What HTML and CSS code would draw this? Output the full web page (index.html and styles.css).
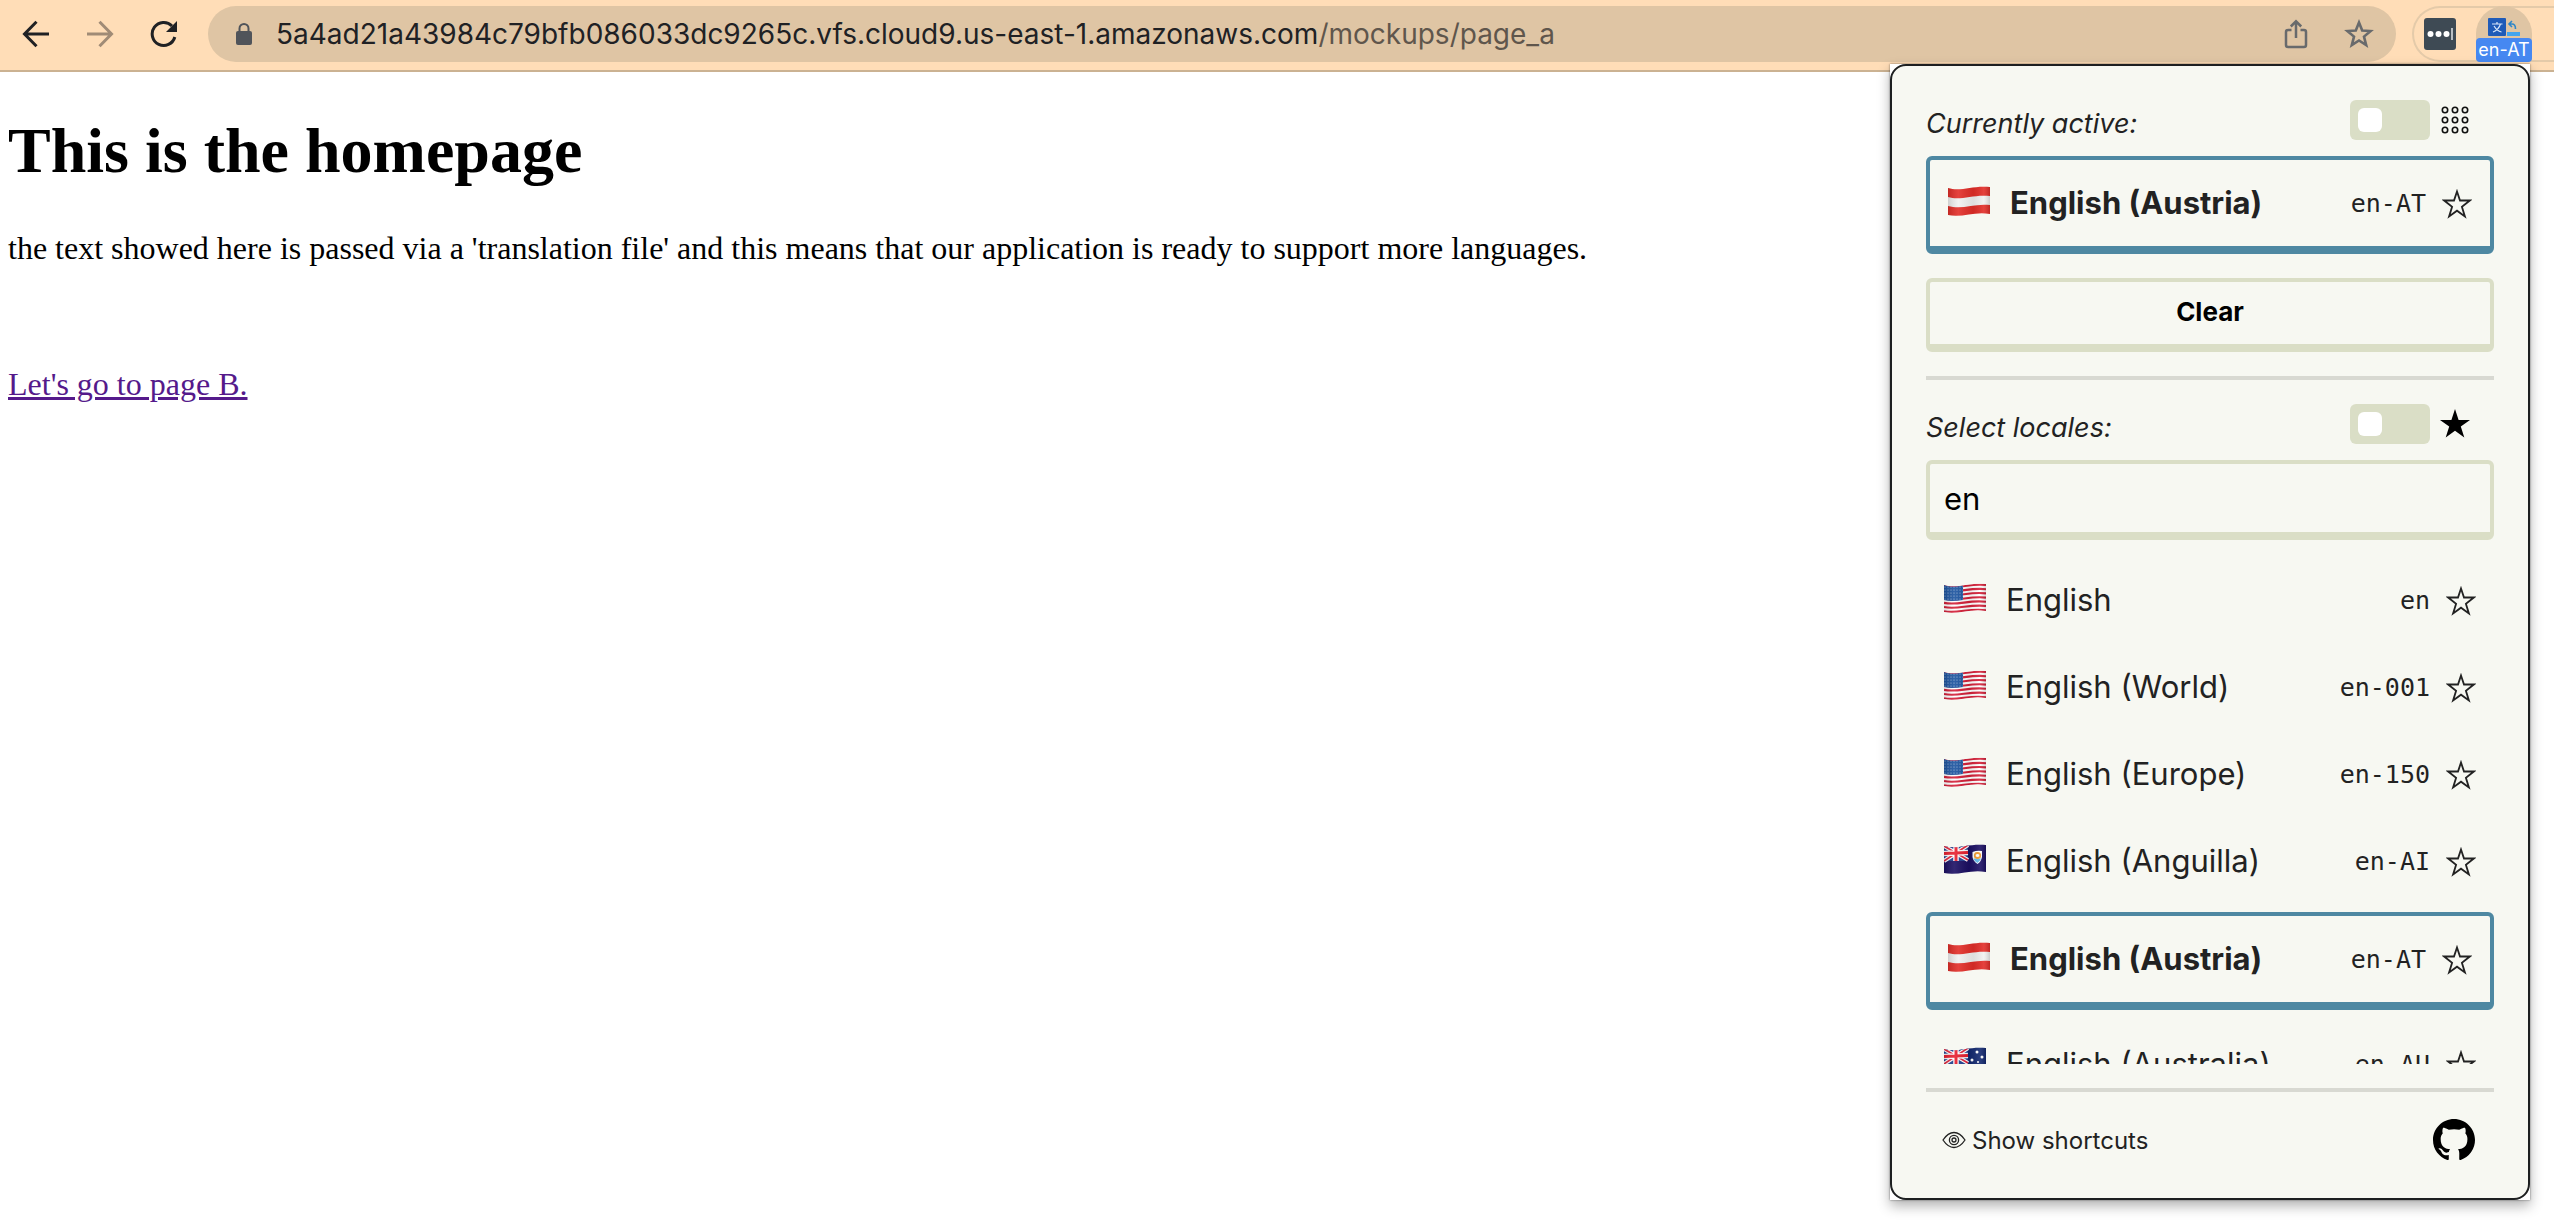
FILE: index.html
```html
<!DOCTYPE html>
<html lang="en">
<head>
<meta charset="utf-8">
<title>This is the homepage</title>
<link rel="stylesheet" href="styles.css">
</head>
<body>
<svg class="sprite" aria-hidden="true">
  <defs>
    <clipPath id="wave"><path d="M0 2C13 6 25-1 42 1V28C26 25 15 32 0 29Z"/></clipPath>
    <linearGradient id="shade"><stop offset="0" stop-color="#000" stop-opacity=".14"/><stop offset=".25" stop-color="#fff" stop-opacity=".1"/><stop offset=".6" stop-color="#000" stop-opacity=".08"/><stop offset=".85" stop-color="#fff" stop-opacity=".1"/><stop offset="1" stop-color="#000" stop-opacity=".16"/></linearGradient>
    <pattern id="stars" width="3" height="3" patternUnits="userSpaceOnUse"><rect width="3" height="3" fill="#1c54a0"/><circle cx="1" cy="1" r=".6" fill="#a9c0de"/></pattern>
    <symbol id="flag-at" viewBox="0 0 42 30"><g clip-path="url(#wave)"><rect width="42" height="30" fill="#e22d28"/><path d="M0 11C13 15 25 8 42 10V19C26 17 15 24 0 20Z" fill="#f1f1f1"/><rect width="42" height="30" fill="url(#shade)"/></g></symbol>
    <symbol id="flag-us" viewBox="0 0 42 30"><g clip-path="url(#wave)"><rect width="42" height="30" fill="#fff"/><g fill="none" stroke="#d51f38" stroke-width="2.1"><path d="M0 3C13 7 25 0 42 2"/><path d="M0 7.2C13 11 25 4 42 6.2"/><path d="M0 11.4C13 15 25 8 42 10.4"/><path d="M0 15.6C13 19 25 12.5 42 14.6"/><path d="M0 19.8C13 23 25 16.5 42 18.8"/><path d="M0 24C13 27 25 21 42 23"/><path d="M0 28.2C13 31 25 25 42 27.2"/></g><path d="M0 2C6 4 12 4 19 2.500V17C12 18 6 18.500 0 17Z" fill="url(#stars)"/><rect width="42" height="30" fill="url(#shade)"/></g></symbol>
    <g id="union-jack"><path d="M0 0H24V17H0Z" fill="#1f3f8f"/><path d="M0 2L24 16M0 17L24 1" stroke="#fff" stroke-width="4"/><path d="M0 2L24 16M0 17L24 1" stroke="#e4253c" stroke-width="1.600"/><path d="M12 0V17M0 9.500L24 8.500" stroke="#fff" stroke-width="5.500"/><path d="M12 0V17M0 9.500L24 8.500" stroke="#e8202f" stroke-width="3"/></g>
    <symbol id="flag-ai" viewBox="0 0 42 30"><g clip-path="url(#wave)"><rect width="42" height="30" fill="#1b0f63"/><use href="#union-jack"/><path d="M28.500 8Q33 6 38 7V13Q37 18 33.500 20Q29 17 28.500 13Z" fill="#fff"/><path d="M29.500 14.500H37Q36 17.500 33.500 19Q30 17 29.500 14.500Z" fill="#62b8e8"/><path d="M31 13Q30 9 33.500 9Q37 9 36 13Q33.500 15 31 13Z" fill="none" stroke="#f0992b" stroke-width="1.800"/><rect width="42" height="30" fill="url(#shade)"/></g></symbol>
    <symbol id="flag-au" viewBox="0 0 42 30"><g clip-path="url(#wave)"><rect width="42" height="30" fill="#12286f"/><use href="#union-jack"/><g fill="#fff"><circle cx="33" cy="5" r="1.500"/><circle cx="28" cy="13" r="1.500"/><circle cx="38" cy="10" r="1.500"/><circle cx="34" cy="15" r="1"/><circle cx="33" cy="23" r="1.500"/><circle cx="12" cy="23" r="2.500"/></g><rect width="42" height="30" fill="url(#shade)"/></g></symbol>
    <symbol id="star" viewBox="0 0 30 30"><path d="M15 2.500L18 11.500H27.800L19.900 17.800L22.900 27.500L15 21.700L7.100 27.500L10.100 17.800L2.200 11.500H12Z" fill="none" stroke="currentColor" stroke-width="1.800"/></symbol>
    <symbol id="star-solid" viewBox="0 0 30 30"><path d="M15 0L18.600 11H30L20.800 17.600L24.300 28.500L15 21.800L5.700 28.500L9.200 17.600L0 11H11.400Z"/></symbol>
  </defs>
</svg>

<header class="toolbar">
  <nav class="nav-buttons">
    <button class="icon-button" aria-label="Back"><svg width="28" height="28" viewBox="0 0 28 28" fill="none" stroke="#202124" stroke-width="3"><path d="M27 14H3M14.500 1.800L2.500 14L14.500 26.200"/></svg></button>
    <button class="icon-button" aria-label="Forward" disabled><svg width="28" height="28" viewBox="0 0 28 28" fill="none" stroke="#a08b76" stroke-width="3"><path d="M1 14H25M13.500 1.800L25.500 14L13.500 26.200"/></svg></button>
    <button class="icon-button" aria-label="Reload"><svg width="28" height="28" viewBox="0 0 28 28"><path d="M24.800 17A11.500 11.500 0 1 1 22 6" fill="none" stroke="#202124" stroke-width="3"/><path d="M27 1V12H16Z" fill="#202124"/></svg></button>
  </nav>
  <div class="omnibox">
    <svg width="16" height="22" viewBox="0 0 16 22"><rect y="8" width="16" height="14" rx="2" fill="#50545a"/><path d="M3.500 9V5.500a4.500 4.500 0 0 1 9 0V9" fill="none" stroke="#50545a" stroke-width="2"/></svg>
    <div class="url" role="textbox" aria-label="Address">5a4ad21a43984c79bfb086033dc9265c.vfs.cloud9.us-east-1.amazonaws.com<span class="url-path">/mockups/page_a</span></div>
    <div class="omnibox-actions">
      <button class="icon-button" aria-label="Share"><svg width="24" height="30" viewBox="0 0 24 30" fill="none" stroke="#686a6c" stroke-width="2.500"><path d="M7.500 11H4Q2 11 2 13V26Q2 28 4 28H20Q22 28 22 26V13Q22 11 20 11H16.500M12 19V2.500M6.800 7.500L12 2.300L17.200 7.500"/></svg></button>
      <button class="icon-button" aria-label="Bookmark"><svg width="30" height="30" viewBox="0 0 30 30"><path d="M15 3.500L18.200 11.500L26.600 12L20 17.600L22.200 26.200L15 21.500L7.800 26.200L10 17.600L3.400 12L11.800 11.500Z" fill="none" stroke="#686a6c" stroke-width="2.600"/></svg></button>
    </div>
  </div>
  <div class="extensions">
    <button class="icon-button" aria-label="Password manager"><svg width="32" height="32" viewBox="0 0 32 32"><rect width="32" height="32" rx="3" fill="#3e4a54"/><g fill="#fff"><circle cx="6.500" cy="16" r="3"/><circle cx="14.500" cy="16" r="3"/><circle cx="22.500" cy="16" r="3"/><rect x="27" y="10" width="2" height="12" fill="#b9bec3"/></g></svg></button>
    <button class="locale-extension" aria-label="Locale switcher en-AT">
      <svg width="32" height="19" viewBox="0 0 32 19"><rect width="18" height="18" rx="1" fill="#1f5bb8"/><path d="M4 6H14.500M9 4V6M12.500 6Q10.500 12 5 14M6 8Q9 13 13.500 14" fill="none" stroke="#dbe8fa" stroke-width="1.200"/><path d="M21 6H24Q27.500 6 27.500 11M24 3L21 6L24 9" fill="none" stroke="#2f87c9" stroke-width="1.600"/><path d="M19 14H32V18H19Z" fill="#43a5ef"/></svg>
      <span class="badge">en-AT</span>
    </button>
  </div>
</header>

<main class="page">
  <h1>This is the homepage</h1>
  <p>the text showed here is passed via a 'translation file' and this means that our application is ready to support more languages.</p>
  <p class="page-link"><a href="#page-b">Let's go to page B.</a></p>
</main>

<aside class="popup-window">
  <div class="popup">
    <div class="section-head">
      <h2>Currently active:</h2>
      <label class="switch"><input type="checkbox" aria-label="Show as grid"><svg width="28" height="28" viewBox="0 0 28 28" fill="none" stroke="#111" stroke-width="1.600"><g id="dots"><circle cx="4" cy="4" r="2.700"/><circle cx="14" cy="4" r="2.700"/><circle cx="24" cy="4" r="2.700"/></g><use href="#dots" y="10"/><use href="#dots" y="20"/></svg></label>
    </div>
    <div class="locale selected">
      <svg class="flag"><use href="#flag-at"/></svg><span class="name">English (Austria)</span><code>en-AT</code><button class="icon-button" aria-label="Star en-AT"><svg width="30" height="30"><use href="#star"/></svg></button>
    </div>
    <button class="clear">Clear</button>
    <hr>
    <div class="section-head">
      <h2><label for="search">Select locales:</label></h2>
      <label class="switch"><input type="checkbox" aria-label="Starred only"><svg width="30" height="30"><use href="#star-solid"/></svg></label>
    </div>
    <input class="search" id="search" type="text" value="en">
    <ul class="locales">
      <li class="locale"><svg class="flag"><use href="#flag-us"/></svg><span class="name">English</span><code>en</code><button class="icon-button" aria-label="Star en"><svg width="30" height="30"><use href="#star"/></svg></button></li>
      <li class="locale"><svg class="flag"><use href="#flag-us"/></svg><span class="name">English (World)</span><code>en-001</code><button class="icon-button" aria-label="Star en-001"><svg width="30" height="30"><use href="#star"/></svg></button></li>
      <li class="locale"><svg class="flag"><use href="#flag-us"/></svg><span class="name">English (Europe)</span><code>en-150</code><button class="icon-button" aria-label="Star en-150"><svg width="30" height="30"><use href="#star"/></svg></button></li>
      <li class="locale"><svg class="flag"><use href="#flag-ai"/></svg><span class="name">English (Anguilla)</span><code>en-AI</code><button class="icon-button" aria-label="Star en-AI"><svg width="30" height="30"><use href="#star"/></svg></button></li>
      <li class="locale selected"><svg class="flag"><use href="#flag-at"/></svg><span class="name">English (Austria)</span><code>en-AT</code><button class="icon-button" aria-label="Star en-AT"><svg width="30" height="30"><use href="#star"/></svg></button></li>
      <li class="locale"><svg class="flag"><use href="#flag-au"/></svg><span class="name">English (Australia)</span><code>en-AU</code><button class="icon-button" aria-label="Star en-AU"><svg width="30" height="30"><use href="#star"/></svg></button></li>
    </ul>
    <hr>
    <footer class="popup-footer">
      <button class="shortcuts"><svg width="24" height="20" viewBox="0 0 24 20" fill="none" stroke="#222" stroke-width="1.300"><path d="M1 10Q6 2.500 12 2.500T23 10Q18 17.500 12 17.500T1 10Z"/><circle cx="12" cy="10" r="4.600"/><circle cx="12" cy="10" r="2"/></svg>Show shortcuts</button>
      <a class="github" href="#github" aria-label="GitHub"><svg width="42" height="42" viewBox="0 0 16 16"><path d="M8 0C3.580 0 0 3.580 0 8c0 3.540 2.290 6.530 5.470 7.590.4.070.55-.17.55-.38 0-.19-.01-.82-.01-1.490-2.010.37-2.530-.49-2.690-.94-.09-.23-.48-.94-.82-1.130-.28-.15-.68-.52-.01-.53.63-.01 1.080.58 1.230.82.72 1.210 1.870.87 2.330.66.07-.52.28-.87.51-1.070-1.780-.2-3.640-.89-3.640-3.950 0-.87.31-1.590.82-2.150-.08-.2-.36-1.020.08-2.120 0 0 .67-.21 2.200.82.64-.18 1.320-.27 2-.27s1.360.09 2 .27c1.530-1.040 2.200-.82 2.200-.82.44 1.100.16 1.920.08 2.120.51.56.82 1.270.82 2.150 0 3.070-1.870 3.750-3.650 3.950.29.25.54.73.54 1.480 0 1.070-.01 1.930-.01 2.200 0 .21.15.46.55.38A8.010 8.010 0 0 0 16 8c0-4.420-3.580-8-8-8z"/></svg></a>
    </footer>
  </div>
</aside>
</body>
</html>
```
FILE: styles.css
```css
* { box-sizing: border-box; }

body {
  margin: 0;
  min-height: 100vh;
  overflow: hidden;
  background: #fff;
  color: #000;
  font-family: "Liberation Serif", serif;
}

button, input { font: inherit; color: inherit; }
svg { display: block; flex: none; }
.sprite { position: absolute; width: 0; height: 0; }

.icon-button {
  display: flex;
  padding: 0;
  border: 0;
  background: none;
}

/* Browser toolbar */
.toolbar {
  display: flex;
  align-items: flex-start;
  gap: 16px;
  height: 72px;
  padding: 6px 0 0 22px;
  border-bottom: 2px solid #cbb292;
  background: #ffddb7;
  font-family: Inter, sans-serif;
}

.nav-buttons {
  display: flex;
  align-items: center;
  gap: 36px;
  height: 56px;
  padding-right: 14px;
}

.omnibox {
  display: flex;
  flex: 1;
  align-items: center;
  gap: 24px;
  min-width: 0;
  height: 56px;
  padding: 0 22px 0 28px;
  border-radius: 28px;
  background: #dfc5a4;
}

.url {
  flex: 1;
  color: #202124;
  font-size: 28px;
  line-height: 56px;
  white-space: nowrap;
}

.url-path { color: #5f564c; }
.omnibox-actions { display: flex; align-items: center; gap: 36px; }

.extensions {
  display: flex;
  align-items: center;
  gap: 20px;
  width: 142px;
  height: 56px;
  padding-left: 10px;
  border: 2px solid #e4caa9;
  border-right: 0;
  border-radius: 28px 0 0 28px;
}

.locale-extension {
  display: flex;
  flex-direction: column;
  align-items: center;
  justify-content: flex-end;
  gap: 1px;
  width: 56px;
  height: 56px;
  padding: 0;
  border: 0;
  border-radius: 28px 28px 4px 4px;
  background: #dfc5a4;
}

.badge {
  width: 56px;
  border-radius: 4px;
  background: #4688f1;
  color: #fff;
  font-size: 18px;
  line-height: 24px;
}

/* Page content */
.page { padding: 0 8px; font-size: 32px; line-height: 36px; }
.page h1 { margin: 42px 0; font-size: 64px; line-height: 74px; }
.page p { margin: 0; }
.page .page-link { margin-top: 100px; }
.page a { color: #551a8b; }

/* Extension popup, over the page */
.popup-window {
  position: absolute;
  top: 64px;
  right: 24px;
  bottom: 22px;
  width: 640px;
  background: #fff;
  box-shadow: 0 0 2px rgba(0, 0, 0, .5), 0 6px 12px rgba(0, 0, 0, .3);
}

.popup {
  display: flex;
  flex-direction: column;
  height: 100%;
  padding: 34px;
  border: 2px solid #1d1f20;
  border-radius: 16px;
  background: #f7f8f2;
  color: #222;
  font-family: Inter, sans-serif;
}

.section-head {
  display: flex;
  align-items: center;
  justify-content: space-between;
  height: 40px;
  margin-bottom: 16px;
  padding-right: 24px;
}

.section-head h2 {
  margin: 0;
  padding-top: 8px;
  font-size: 27px;
  font-style: italic;
  font-weight: 400;
  line-height: 32px;
}

.switch { display: flex; align-items: center; gap: 10px; color: #000; }
.switch svg { width: 30px; }

.switch input {
  display: flex;
  align-items: center;
  width: 80px;
  height: 40px;
  margin: 0;
  padding: 8px;
  border-radius: 6px;
  background: #dadec6;
  appearance: none;
}

.switch input::before {
  width: 24px;
  height: 24px;
  border-radius: 6px;
  background: #fff;
  content: "";
}

.locale {
  display: flex;
  flex: none;
  align-items: center;
  height: 87px;
  padding: 0 18px;
  font-size: 31px;
  line-height: 40px;
}

.flag { width: 42px; height: 30px; margin: 0 20px 4px 0; }
.name { flex: 1; }

.locale code {
  margin-right: 16px;
  padding-top: 2px;
  font-family: "DejaVu Sans Mono", monospace;
  font-size: 25px;
}

.locale .icon-button { padding-top: 2px; }

.selected {
  height: 98px;
  border: 4px solid #4e88a2;
  border-bottom-width: 8px;
  border-radius: 6px;
}

.selected .name { font-weight: 700; }

.clear, .search {
  flex: none;
  border: 4px solid #dadec6;
  border-bottom-width: 8px;
  border-radius: 6px;
  background: transparent;
  color: #000;
}

.clear { height: 74px; margin-top: 24px; padding: 0 0 4px; font-size: 26px; font-weight: 700; }
.search { height: 80px; padding: 0 14px; font-size: 31px; }

hr { flex: none; align-self: stretch; height: 4px; margin: 24px 0; border: 0; background: #d8d9d2; }

.locales {
  flex: 1;
  min-height: 0;
  margin: 16px 0 0;
  padding: 0;
  overflow: hidden;
  list-style: none;
}

.locales .selected { margin: 8px 0 10px; }

.popup-footer {
  display: flex;
  align-items: center;
  justify-content: space-between;
  height: 48px;
  padding: 0 19px 0 16px;
}

.shortcuts {
  display: flex;
  align-items: center;
  gap: 6px;
  padding: 0;
  border: 0;
  background: none;
  font-size: 24px;
}

.github { color: #000; }
```
